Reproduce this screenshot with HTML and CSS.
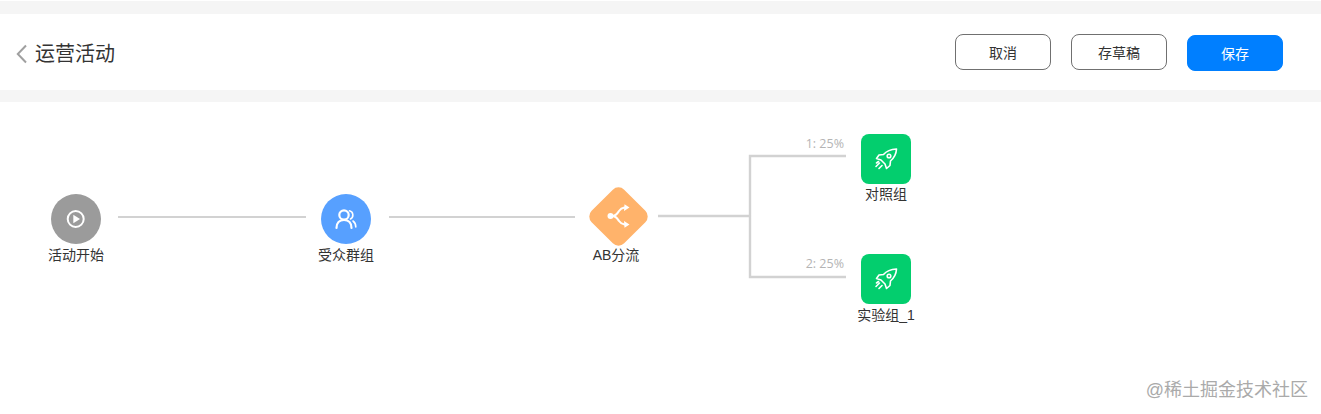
FILE: index.html
```html
<!DOCTYPE html>
<html lang="zh">
<head>
<meta charset="utf-8">
<title>运营活动</title>
<link rel="stylesheet" href="styles.css">
</head>
<body>
<div class="page">
  <header class="header">
    <div class="title-group">
      <svg class="back" width="12" height="20" viewBox="0 0 12 20"><path d="M10 1.500 1.800 10l8.200 8.500" fill="none" stroke="#a0a0a0" stroke-width="2"/></svg>
      <h1 class="title">运营活动</h1>
    </div>
    <div class="actions">
      <button class="btn">取消</button>
      <button class="btn">存草稿</button>
      <button class="btn btn-primary">保存</button>
    </div>
  </header>
  <main class="canvas">
    <svg class="edges" width="1321" height="312" viewBox="0 0 1321 312" fill="none" stroke="#d2d2d2">
      <path d="M118 115H306M389 115H575" stroke-width="2"/>
      <path d="M658 114H750M846 54H750V175H846" stroke-width="2.400"/>
    </svg>
    <span class="ratio ratio-a">1: 25%</span>
    <span class="ratio ratio-b">2: 25%</span>

    <div class="node node-start">
      <div class="icon circle grey">
        <svg width="22" height="22" viewBox="0 0 22 22"><circle cx="10.700" cy="11" r="8" fill="none" stroke="#fff" stroke-width="2"/><path d="M8.300 6.800v8.400l6.700-4.200z" fill="#fff"/></svg>
      </div>
      <span class="label">活动开始</span>
    </div>

    <div class="node node-aud">
      <div class="icon circle blue">
        <svg width="24" height="24" viewBox="0 0 24 24" fill="none" stroke="#fff" stroke-width="2.200" stroke-linecap="round"><circle cx="10" cy="8" r="4.700"/><path d="M2.500 21c0-5 3-8 7.500-8s7.500 3 7.500 8"/><path d="M15.500 3.700a4.500 4.500 0 0 1 1 8.300M19 14c1.800 1.300 2.800 3.500 2.800 6" stroke-width="1.600"/></svg>
      </div>
      <span class="label">受众群组</span>
    </div>

    <div class="node node-ab">
      <div class="diamond-wrap">
        <div class="diamond"></div>
        <svg class="diamond-icon" width="24" height="24" viewBox="0 0 24 24" fill="none" stroke="#fff" stroke-width="2"><circle cx="3.500" cy="12" r="3" fill="#fff" stroke="none"/><path d="M5 12c4 0 5-2 7-5s3-3 6-3.500M5 12c4 0 5 2 7 5s3 3 6 3.500"/><path d="M17.500 .3 22.500 3.500 17 7zM17.500 23.700 22.500 20.500 17 17z" fill="#fff" stroke="none"/></svg>
      </div>
      <span class="label">AB分流</span>
    </div>

    <div class="node node-ctrl">
      <div class="icon square green">
        <svg width="24" height="24" viewBox="0 0 24 24" fill="none" stroke="#fff" stroke-width="1.600" stroke-linejoin="round" stroke-linecap="round"><path d="M22.500 2c-6.500 .3-10 2-13 5.500L5 8 2.500 11.500l4.500 1.500 4 4 1.500 4.500 3.500-3 .5-4.500c3.500-3 5.700-6.500 6-12z"/><circle cx="15" cy="9" r="1.800"/><path d="M5.500 16 2 19.500M8 18.500l-3 3M4.500 14.500l-2 1.500"/></svg>
      </div>
      <span class="label label-tight">对照组</span>
    </div>

    <div class="node node-exp">
      <div class="icon square green">
        <svg width="24" height="24" viewBox="0 0 24 24" fill="none" stroke="#fff" stroke-width="1.600" stroke-linejoin="round" stroke-linecap="round"><path d="M22.500 2c-6.500 .3-10 2-13 5.500L5 8 2.500 11.500l4.500 1.500 4 4 1.500 4.500 3.500-3 .5-4.500c3.500-3 5.700-6.500 6-12z"/><circle cx="15" cy="9" r="1.800"/><path d="M5.500 16 2 19.500M8 18.500l-3 3M4.500 14.500l-2 1.500"/></svg>
      </div>
      <span class="label">实验组_1</span>
    </div>

    <span class="watermark">@稀土掘金技术社区</span>
  </main>
</div>
</body>
</html>
```
FILE: styles.css
```css
* { box-sizing: border-box; }
html, body { margin: 0; height: 100%; background: #fff; }
body {
  font-family: "Liberation Sans", "Noto Sans CJK SC", sans-serif;
  color: #333;
  overflow: hidden;
}
.page {
  width: 1321px;
  height: 414px;
  display: flex;
  flex-direction: column;
  padding-top: 1px;
}
.header {
  height: 101px;
  display: flex;
  align-items: center;
  justify-content: space-between;
  padding: 0 38px 0 16px;
  background: #fff;
  border-top: 13px solid #f5f5f5;
  border-bottom: 12px solid #f5f5f5;
}
.title-group { display: flex; align-items: center; gap: 7px; padding-top: 4px; }
.back { display: block; }
.title { margin: 0; font-size: 20px; font-weight: 400; line-height: 28px; color: #333; }
.actions { display: flex; align-items: flex-start; gap: 20px; }
.btn {
  width: 96px;
  height: 36px;
  border: 1px solid #707070;
  border-radius: 8px;
  background: #fff;
  color: #333;
  font: inherit;
  font-size: 14px;
  padding: 0;
}
.btn-primary { border-color: #007fff; background: #007fff; color: #fff; margin-top: 1px; }
.canvas { position: relative; flex: 1; }
.edges { position: absolute; left: 0; top: 0; display: block; }
.ratio { position: absolute; width: 60px; text-align: right; font-family: "Open Sans", "Liberation Sans", sans-serif; font-size: 12.500px; line-height: 16px; color: #b4b4b4; left: 784px; }
.ratio-a { top: 34px; }
.ratio-b { top: 154px; }
.node {
  position: absolute;
  width: 100px;
  display: flex;
  flex-direction: column;
  align-items: center;
}
.node-start { left: 26px; top: 92px; }
.node-aud { left: 296px; top: 92px; }
.node-ab { left: 566px; top: 85px; }
.node-ctrl { left: 836px; top: 32px; }
.node-exp { left: 836px; top: 152px; }
.icon { width: 50px; height: 50px; display: flex; align-items: center; justify-content: center; }
.circle { border-radius: 50%; }
.square { border-radius: 8px; }
.grey { background: #9b9b9b; }
.blue { background: #57a0ff; }
.green { background: #03ce6e; }
.diamond-wrap { position: relative; width: 60px; height: 60px; display: flex; align-items: center; justify-content: center; margin-bottom: -3px; }
.diamond { flex: none; width: 46px; height: 46px; background: #ffb36b; border-radius: 8px; transform: translate(2.500px, -.500px) rotate(45deg); }
.diamond-icon { position: absolute; left: 21px; top: 17px; }
.label { font-size: 14px; line-height: 20px; margin-top: 1px; color: #333; white-space: nowrap; }
.label-tight { margin-top: 0; }
.watermark {
  position: absolute;
  right: 13px;
  bottom: 12px;
  font-size: 18px;
  line-height: 24px;
  color: #aaa;
  white-space: nowrap;
}
```
